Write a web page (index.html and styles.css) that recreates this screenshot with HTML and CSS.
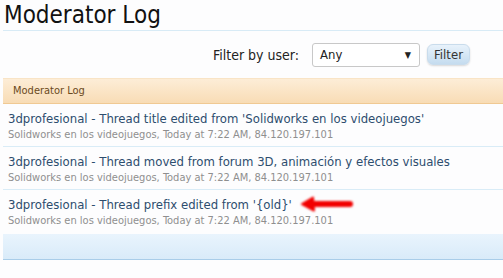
FILE: index.html
```html
<!DOCTYPE html>
<html>
<head>
<meta charset="utf-8">
<link rel="stylesheet" href="styles.css">
</head>
<body>
<div class="page">
  <h1 class="title">Moderator Log</h1>
  <div class="filter">
    <span class="filter-label">Filter by user:</span>
    <div class="select"><span>Any</span><span class="caret">▼</span></div>
    <button class="btn">Filter</button>
  </div>
  <div class="section">
    <div class="section-head">Moderator Log</div>
    <div class="row">
      <div class="row-title">3dprofesional - Thread title edited from 'Solidworks en los videojuegos'</div>
      <div class="row-meta">Solidworks en los videojuegos, Today at 7:22 AM, 84.120.197.101</div>
    </div>
    <div class="row">
      <div class="row-title">3dprofesional - Thread moved from forum 3D, animación y efectos visuales</div>
      <div class="row-meta">Solidworks en los videojuegos, Today at 7:22 AM, 84.120.197.101</div>
    </div>
    <div class="row last">
      <div class="row-title">3dprofesional - Thread prefix edited from '{old}'<svg class="arrow" width="52" height="16" viewBox="0 0 52 16"><path d="M8 8 H49" stroke="#f20000" stroke-width="6" stroke-linecap="round"/><path d="M1 8 L12 1.5 L13 14.5 Z" fill="#f20000" stroke="#f20000" stroke-width="2" stroke-linejoin="round"/></svg></div>
      <div class="row-meta">Solidworks en los videojuegos, Today at 7:22 AM, 84.120.197.101</div>
    </div>
    <div class="section-foot"></div>
  </div>
</div>
</body>
</html>
```
FILE: styles.css
```css
html, body { margin: 0; padding: 0; background: #fdfdfe; }
body { font-family: "DejaVu Sans Condensed", "DejaVu Sans", sans-serif; color: #222; }
.page { padding-left: 3px; }
.title {
  margin: 0;
  padding-left: 1px;
  height: 30px;
  font-size: 24px;
  line-height: 30px;
  font-weight: normal;
  color: #111;
  border-bottom: 1px solid #d8ebf6;
}
.filter {
  height: 47px;
  display: flex;
  align-items: center;
  justify-content: flex-end;
  padding-right: 33px;
}
.filter-label { font-size: 14px; color: #222; margin-right: 13px; }
.select {
  border: 1px solid #c8c8c8;
  border-radius: 3px;
  background: #fff;
  display: flex;
  align-items: center;
  justify-content: space-between;
  padding: 0 8px 0 7px;
  box-sizing: border-box;
  width: 108px;
  height: 24px;
  font-size: 13px;
  color: #222;
}
.caret { font-size: 9px; }
.btn {
  margin-left: 7px;
  width: 43px;
  height: 21px;
  border: 1px solid #c9dcec;
  border-radius: 6px;
  background: linear-gradient(#e8f2fb, #c5dcef);
  box-shadow: 0 1px 2px rgba(0,0,0,0.15);
  font-family: inherit;
  font-size: 13px;
  color: #333;
  padding: 0;
}
.section-head {
  height: 24px;
  line-height: 24px;
  padding-left: 10px;
  background: linear-gradient(#fdedd7, #f8dcb5);
  border-top: 1px solid #f9e4c6;
  border-bottom: 1px solid #f0c993;
  font-size: 11px;
  color: #6b4a1d;
}
.row {
  height: 43px;
  padding: 6px 0 0 5px;
  box-sizing: border-box;
  border-bottom: 1px solid #d9ecf7;
}
.row.last { border-bottom: none; height: 44px; }
.row-title {
  font-size: 13px;
  line-height: 17px;
  color: #2d4d6e;
  white-space: nowrap;
}
.row-meta {
  font-size: 11px;
  line-height: 14px;
  color: #8f8f8f;
  margin-top: 1px;
  white-space: nowrap;
}
.arrow { margin-left: 9px; vertical-align: -3px; filter: blur(0.8px); }
.section-foot {
  height: 25px;
  background: linear-gradient(#e9f4fd, #d9ebf9);
  border-bottom: 1px solid #a9cde9;
}
```
